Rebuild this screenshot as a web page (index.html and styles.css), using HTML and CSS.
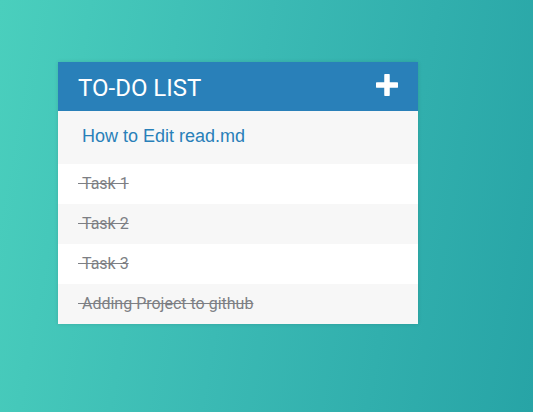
FILE: index.html
```html
<!DOCTYPE html>
<html>
<head>
<meta charset="utf-8">
<link rel="stylesheet" href="styles.css">
</head>
<body>
<div class="card">
  <header class="card-head">
    <h1 class="title">TO-DO LIST</h1>
    <svg class="plus" width="22" height="22" viewBox="0 0 22 22"><path d="M11 1.5v19M1.5 11h19" stroke="#fff" stroke-width="5.5" stroke-linecap="round"/></svg>
  </header>
  <div class="new-item">
    <input class="new-input" type="text" placeholder="How to Edit read.md">
  </div>
  <ul class="tasks">
    <li class="task done">&nbsp;Task 1</li>
    <li class="task done">&nbsp;Task 2</li>
    <li class="task done">&nbsp;Task 3</li>
    <li class="task done">&nbsp;Adding Project to github</li>
  </ul>
</div>
</body>
</html>
```
FILE: styles.css
```css
html, body {
  margin: 0;
  height: 100%;
}
body {
  background: linear-gradient(100deg, #4acfbd 0%, #3bbab4 45%, #27a4a6 100%);
  font-family: Roboto, "Liberation Sans", sans-serif;
  padding: 62px 0 0 58px;
  box-sizing: border-box;
}
.card {
  width: 360px;
  background: #fff;
  box-shadow: 0 0 4px rgba(0,0,0,0.12);
}
.card-head {
  height: 49px;
  background: #2980b9;
  display: flex;
  align-items: center;
  justify-content: space-between;
  padding: 0 20px;
}
.title {
  margin: 0;
  font-weight: 400;
  font-size: 24px;
  color: #fff;
  padding-top: 2px;
}
.plus {
  display: block;
  margin-top: -4px;
}
.new-item {
  height: 53px;
  background: #f7f7f7;
  display: flex;
  align-items: center;
}
.new-input {
  border: none;
  background: transparent;
  width: 100%;
  padding: 0 0 0 24px;
  font-family: "Liberation Sans", Arial, sans-serif;
  font-size: 18px;
  color: #2980b9;
  outline: none;
  margin-top: -2px;
}
.new-input::placeholder {
  color: #2980b9;
  opacity: 1;
}
.tasks {
  list-style: none;
  margin: 0;
  padding: 0;
}
.task {
  height: 40px;
  line-height: 40px;
  padding-left: 20px;
  font-size: 16px;
  color: #7d7f84;
  text-decoration: line-through;
}
.task:nth-child(even) {
  background: #f7f7f7;
}
.task:nth-child(odd) {
  background: #fff;
}
```
